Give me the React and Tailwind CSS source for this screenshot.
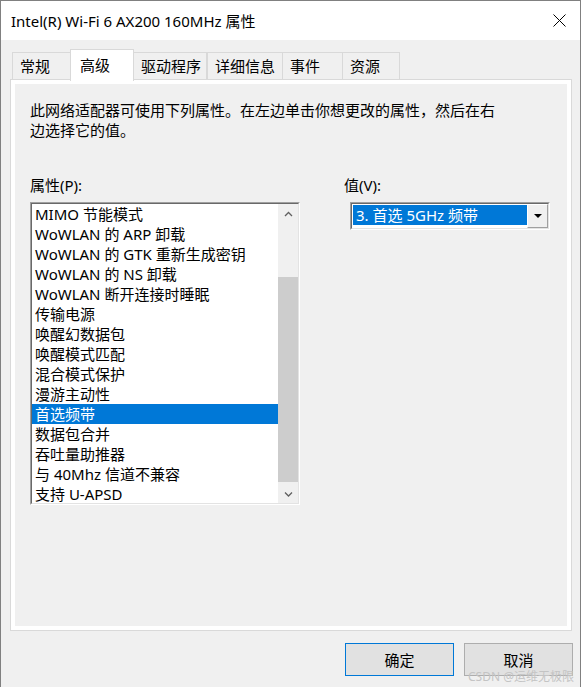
import React from 'react'

const font = { fontFamily: '"Noto Sans", "Noto Sans CJK SC", sans-serif' }

const tabs = ['常规', '高级', '驱动程序', '详细信息', '事件', '资源']
const tabWidths = ['w-[58px]', 'w-[64px]', 'w-[73px]', 'w-[75px]', 'w-[60px]', 'w-[58px]']

const props = [
    'MIMO 节能模式',
    'WoWLAN 的 ARP 卸载',
    'WoWLAN 的 GTK 重新生成密钥',
    'WoWLAN 的 NS 卸载',
    'WoWLAN 断开连接时睡眠',
    '传输电源',
    '唤醒幻数据包',
    '唤醒模式匹配',
    '混合模式保护',
    '漫游主动性',
    '首选频带',
    '数据包合并',
    '吞吐量助推器',
    '与 40Mhz 信道不兼容',
    '支持 U-APSD',
]

function Sunken({ className, children }) {
    return (
        <div className={'border border-t-[#a0a0a0] border-l-[#a0a0a0] border-r-white border-b-white ' + className}>
            <div className='w-full h-full border border-t-[#696969] border-l-[#696969] border-r-[#e3e3e3] border-b-[#e3e3e3] flex'>
                {children}
            </div>
        </div>
    )
}

function Chevron({ down }) {
    return (
        <svg width='9' height='6' viewBox='0 0 9 6'>
            <path d={down ? 'M1 1.5 L4.5 5 L8 1.5' : 'M1 5 L4.5 1.5 L8 5'} fill='none' stroke='#606060' strokeWidth='1.3' />
        </svg>
    )
}

export default function App() {
    return (
        <div style={font} className='relative w-[581px] h-[687px] bg-[#f0f0f0] border-t border-x border-[#808080] flex flex-col overflow-hidden text-[15px] text-black'>
            {/* title bar */}
            <div className='h-[39px] bg-white flex items-center justify-between pl-[10px] pr-[14px]'>
                <span className='leading-[20px] whitespace-nowrap'>Intel(R) Wi-Fi 6 AX200 160MHz 属性</span>
                <svg width='13' height='13' viewBox='0 0 13 13'>
                    <path d='M0.5 0.5 L12.5 12.5 M12.5 0.5 L0.5 12.5' stroke='#000' strokeWidth='1' />
                </svg>
            </div>

            <div className='flex flex-col pl-[9px] pr-[8px] pt-[9px]'>
                {/* tabs */}
                <div className='relative z-10 flex items-end h-[30px] ml-[2px]'>
                    {tabs.map((t, i) => i === 1 ? (
                        <div key={t} className={tabWidths[i] + ' h-[32px] -mb-[2px] bg-white border-t border-x border-[#d9d9d9] pt-[5px] pl-[9px] leading-[20px] whitespace-nowrap'}>{t}</div>
                    ) : (
                        <div key={t} className={tabWidths[i] + ' h-[27px] bg-[#f0f0f0] border-t border-[#d9d9d9] flex items-center pl-[7px] whitespace-nowrap ' + (i === tabs.length - 1 ? 'border-x' : i === 2 ? 'border-r' : 'border-l')}>{t}</div>
                    ))}
                </div>

                {/* tab page */}
                <div className='h-[552px] border border-[#d9d9d9]'>
                    <div className='h-full border-4 border-white flex flex-col pl-[15px] pt-[16px]'>
                        <p className='leading-[20px] whitespace-nowrap'>
                            此网络适配器可使用下列属性。在左边单击你想更改的属性，然后在右<br />边选择它的值。
                        </p>
                        <div className='flex mt-[35px] gap-[44px]'>
                            <div className='flex flex-col gap-[7px]'>
                                <span className='leading-[20px]'>属性(P):</span>
                                <Sunken className='w-[270px] h-[303px] bg-white'>
                                    <div className='flex-1 flex flex-col overflow-hidden'>
                                        {props.map((p, i) => (
                                            <div key={p} className={'h-[20px] shrink-0 leading-[20px] pl-[3px] whitespace-nowrap ' + (i === 10 ? 'bg-[#0078d7] text-white' : '')}>{p}</div>
                                        ))}
                                    </div>
                                    <div className='w-[20px] bg-[#f0f0f0] flex flex-col'>
                                        <div className='h-[20px] flex items-center justify-center'><Chevron /></div>
                                        <div className='flex-1 flex flex-col pt-[54px] pb-[2px]'>
                                            <div className='h-[205px] bg-[#cdcdcd]' />
                                        </div>
                                        <div className='h-[20px] flex items-center justify-center'><Chevron down /></div>
                                    </div>
                                </Sunken>
                            </div>

                            <div className='flex flex-col gap-[7px]'>
                                <span className='leading-[20px]'>值(V):</span>
                                <Sunken className='ml-[6px] w-[200px] h-[28px] bg-white'>
                                    <div className='flex-1 flex items-start p-[1px] pr-0'>
                                        <div className='flex-1 h-[20px] bg-[#0078d7] text-white leading-[20px] pl-[3px] whitespace-nowrap'>3. 首选 5GHz 频带</div>
                                    </div>
                                    <div className='w-[21px] bg-[#f0f0f0] border border-t-white border-l-white border-r-[#a0a0a0] border-b-[#a0a0a0] flex items-center justify-center'>
                                        <svg width='8' height='4' viewBox='0 0 8 4'>
                                            <polygon points='0,0 8,0 4,4' fill='#000' />
                                        </svg>
                                    </div>
                                </Sunken>
                            </div>
                        </div>
                    </div>
                </div>
            </div>

            {/* buttons */}
            <div className='flex justify-end gap-[10px] pt-[12px] pr-[7px]'>
                <button className='w-[109px] h-[33px] bg-[#e1e1e1] border border-[#0078d7] leading-[20px]'>确定</button>
                <button className='w-[109px] h-[33px] bg-[#e1e1e1] border border-[#adadad] leading-[20px]'>取消</button>
            </div>

            <span className='absolute right-[6px] bottom-[3px] text-[12px] leading-[14px] text-[#c4c4c4] whitespace-nowrap'>CSDN @运维无极限</span>
        </div>
    )
}
